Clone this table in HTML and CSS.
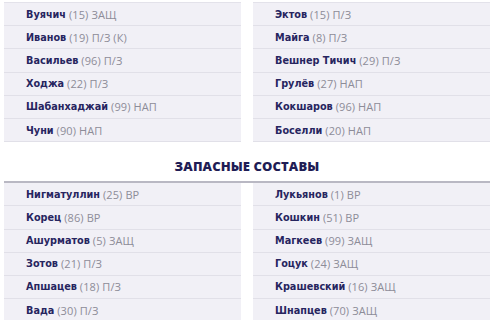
FILE: index.html
```html
<!DOCTYPE html>
<html lang="ru">
<head>
<meta charset="utf-8">
<link rel="stylesheet" href="styles.css">
</head>
<body>
<div class="page">
  <div class="cols top">
    <ul class="list">
      <li><b>Вуячич</b> (15) ЗАЩ</li>
      <li><b>Иванов</b> (19) П/З (К)</li>
      <li><b>Васильев</b> (96) П/З</li>
      <li><b>Ходжа</b> (22) П/З</li>
      <li><b>Шабанхаджай</b> (99) НАП</li>
      <li><b>Чуни</b> (90) НАП</li>
    </ul>
    <ul class="list">
      <li><b>Эктов</b> (15) П/З</li>
      <li><b>Майга</b> (8) П/З</li>
      <li><b>Вешнер Тичич</b> (29) П/З</li>
      <li><b>Грулёв</b> (27) НАП</li>
      <li><b>Кокшаров</b> (96) НАП</li>
      <li><b>Боселли</b> (20) НАП</li>
    </ul>
  </div>
  <h2 class="heading">ЗАПАСНЫЕ СОСТАВЫ</h2>
  <div class="cols">
    <ul class="list">
      <li><b>Нигматуллин</b> (25) ВР</li>
      <li><b>Корец</b> (86) ВР</li>
      <li><b>Ашурматов</b> (5) ЗАЩ</li>
      <li><b>Зотов</b> (21) П/З</li>
      <li><b>Апшацев</b> (18) П/З</li>
      <li><b>Вада</b> (30) П/З</li>
    </ul>
    <ul class="list">
      <li><b>Лукьянов</b> (1) ВР</li>
      <li><b>Кошкин</b> (51) ВР</li>
      <li><b>Магкеев</b> (99) ЗАЩ</li>
      <li><b>Гоцук</b> (24) ЗАЩ</li>
      <li><b>Крашевский</b> (16) ЗАЩ</li>
      <li><b>Шнапцев</b> (70) ЗАЩ</li>
    </ul>
  </div>
</div>
</body>
</html>
```
FILE: styles.css
```css
* { box-sizing: border-box; }
html, body { margin: 0; padding: 0; background: #ffffff; }
body {
  font-family: "Open Sans", "Noto Sans", sans-serif;
  width: 500px;
  height: 320px;
  overflow: hidden;
}
.page {
  width: 486px;
  margin-left: 4px;
}
.cols {
  display: grid;
  grid-template-columns: 237px 237px;
  column-gap: 12px;
}
.top {
  padding-top: 2px;
}
.list {
  list-style: none;
  margin: 0;
  padding: 0;
}
.top .list {
  border-top: 1px solid #e3e2ea;
}
.list li {
  height: 23.2px;
  display: flex;
  align-items: center;
  padding-left: 22px;
  background: #f1f0f6;
  border-bottom: 1px solid #e1e0e8;
  font-size: 11px;
  letter-spacing: 0.1px;
  color: #8d8c98;
  white-space: pre;
}
.list li b {
  font-family: "DejaVu Sans", sans-serif;
  font-size: 9.7px;
  letter-spacing: 0;
  font-weight: 700;
  color: #27255f;
}
.heading {
  margin: 0;
  padding: 16px 0 7px;
  line-height: 16px;
  text-align: center;
  font-size: 13px;
  font-weight: 800;
  color: #1f1d55;
  border-bottom: 2px solid #b9b8c3;
  letter-spacing: 0.1px;
}
```
